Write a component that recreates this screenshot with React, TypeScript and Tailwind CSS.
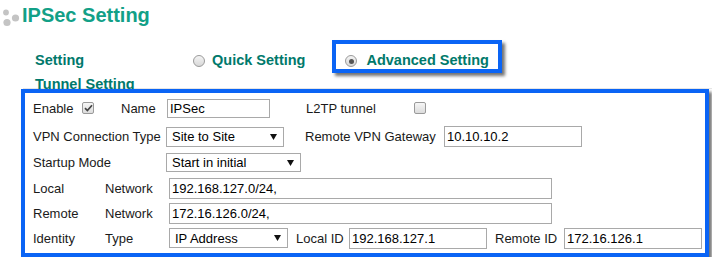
import React from "react";

const blue = "border-[#0a64f5]";

function Radio({ checked }: { checked?: boolean }) {
  return (
    <span className="inline-flex items-center justify-center w-[12px] h-[12px] rounded-full border border-[#9a9a9a] bg-gradient-to-b from-[#f4f4f4] to-[#d8d8d8] shrink-0">
      {checked && <span className="w-[5px] h-[5px] rounded-full bg-[#555]" />}
    </span>
  );
}

function Check({ checked }: { checked?: boolean }) {
  return (
    <span className="inline-flex items-center justify-center w-[12px] h-[12px] rounded-[2px] border border-[#9a9a9a] bg-gradient-to-b from-[#f6f6f6] to-[#dcdcdc] shrink-0">
      {checked && (
        <svg width="9" height="8" viewBox="0 0 9 8">
          <path d="M1 4.2 L3.4 6.6 L8 1.2" fill="none" stroke="#444" strokeWidth="1.7" />
        </svg>
      )}
    </span>
  );
}

function TextBox({ value, className }: { value: string; className: string }) {
  return (
    <div className={`flex items-center border border-[#a9a9a9] bg-white pl-[2px] text-black ${className}`}>
      {value}
    </div>
  );
}

function Select({ value, className }: { value: string; className: string }) {
  return (
    <div className={`flex items-center justify-between border border-[#a9a9a9] bg-white pl-[5px] pr-[6px] text-black ${className}`}>
      <span>{value}</span>
      <svg width="7" height="6" viewBox="0 0 7 6">
        <path d="M0 0 H7 L3.5 6 Z" fill="#111" />
      </svg>
    </div>
  );
}

export default function App() {
  return (
    <div className="w-[712px] h-[257px] bg-white overflow-hidden font-['Liberation_Sans',Arial,sans-serif]">
      {/* title */}
      <div className="flex items-start h-[24px] mt-[3px]">
        <svg width="22" height="24" viewBox="0 0 22 24" className="shrink-0">
          <circle cx="6" cy="9.5" r="2.9" fill="#c4c4c4" />
          <circle cx="7" cy="19.5" r="3.6" fill="#c4c4c4" />
          <circle cx="15.5" cy="15" r="3.6" fill="#c4c4c4" />
        </svg>
        <span className="text-[20px] leading-[24px] font-bold text-[#12a087]">IPSec Setting</span>
      </div>

      {/* mode selection */}
      <div className="flex h-[33px] mt-[13px] text-[14.5px] font-bold text-[#00796b]">
        <div className="flex items-center h-[18px] mt-[12px] pl-[35px]">
          <span className="w-[158px]">Setting</span>
          <Radio />
          <span className="ml-[7px]">Quick Setting</span>
        </div>
        <div className={`flex items-start ml-[27px] w-[170px] h-[33px] border-4 ${blue} pt-[8px] pl-[9px] shadow-[3px_3px_3px_rgba(0,0,0,0.55)]`}>
          <div className="flex items-center h-[18px]">
            <Radio checked />
            <span className="ml-[9px]">Advanced Setting</span>
          </div>
        </div>
      </div>

      {/* tunnel heading */}
      <div className="h-[14px] mt-[2px] ml-[23px] border-b border-[#e6e6e6] text-[14.5px] leading-[18px] font-bold text-[#00796b]">
        <span className="pl-[12px]">Tunnel Setting</span>
      </div>

      {/* tunnel form */}
      <div className={`relative ml-[21px] w-[688px] h-[168px] border-4 ${blue} bg-transparent shadow-[3px_3px_3px_rgba(0,0,0,0.55)] pl-[8px] text-[13px] leading-[15px] text-[#1a1a1a]`}>
        <div className="flex items-center h-[30px]">
          <span className="w-[49px]">Enable</span>
          <Check checked />
          <span className="ml-[27px] w-[46px]">Name</span>
          <TextBox value="IPSec" className="w-[103px] h-[19px]" />
          <span className="ml-[36px] w-[108px]">L2TP tunnel</span>
          <Check />
        </div>
        <div className="flex items-center h-[27px]">
          <span className="w-[133px]">VPN Connection Type</span>
          <Select value="Site to Site" className="w-[118px] h-[20px]" />
          <span className="ml-[21px] w-[139px]">Remote VPN Gateway</span>
          <TextBox value="10.10.10.2" className="w-[138px] h-[21px]" />
        </div>
        <div className="flex items-center h-[25px]">
          <span className="w-[133px]">Startup Mode</span>
          <Select value="Start in initial" className="w-[135px] h-[19px]" />
        </div>
        <div className="flex items-center h-[26px]">
          <span className="w-[72px]">Local</span>
          <span className="w-[64px]">Network</span>
          <TextBox value="192.168.127.0/24," className="w-[383px] h-[21px]" />
        </div>
        <div className="flex items-center h-[24px]">
          <span className="w-[72px]">Remote</span>
          <span className="w-[64px]">Network</span>
          <TextBox value="172.16.126.0/24," className="w-[383px] h-[21px]" />
        </div>
        <div className="flex items-center h-[26px]">
          <span className="w-[72px]">Identity</span>
          <span className="w-[64px]">Type</span>
          <Select value="IP Address" className="w-[119px] h-[20px]" />
          <span className="ml-[8px] w-[53px]">Local ID</span>
          <TextBox value="192.168.127.1" className="w-[138px] h-[21px]" />
          <span className="ml-[8px] w-[69px]">Remote ID</span>
          <TextBox value="172.16.126.1" className="w-[138px] h-[21px]" />
        </div>
      </div>
    </div>
  );
}
